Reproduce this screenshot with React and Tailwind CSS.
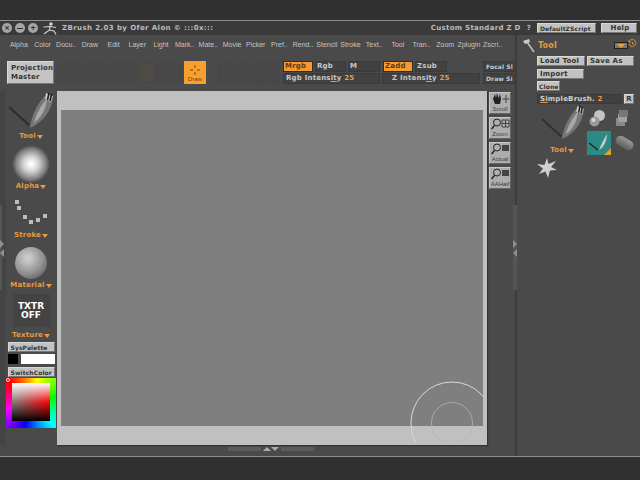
import React from 'react';

const menu = ['Alpha', 'Color', 'Docu..', 'Draw', 'Edit', 'Layer', 'Light', 'Mark..', 'Mate..', 'Movie', 'Picker', 'Pref..', 'Rend..', 'Stencil', 'Stroke', 'Text..', 'Tool', 'Tran..', 'Zoom', 'Zplugin', 'Zscri..'];

const label = "font-['DejaVu_Sans',sans-serif] font-bold text-[7px] leading-[9px] tracking-[0.2px] whitespace-nowrap";
const tight = "!text-[6px] !tracking-[0.1px]";
const mark = "underline decoration-[#e89a3c] underline-offset-1";

const GrayBtn = ({ children, className = '' }) => (
  <div className={`${label} flex items-center pl-[2px] bg-[#c2c2c2] text-[#333] border border-[#d8d8d8] border-b-[#777] border-r-[#777] overflow-hidden ${className}`}>
    {children}
  </div>
);

const DarkField = ({ children, className = '' }) => (
  <div className={`${label} flex items-center pl-[2px] bg-[#414141] text-[#c8c8c8] border border-[#3a3a3a] overflow-hidden ${className}`}>
    {children}
  </div>
);

const OrangeLabel = ({ children }) => (
  <div className={`${label} flex items-center justify-center gap-[1px] text-[#e89a3c]`}>
    {children}
    <span className="w-0 h-0 border-x-[3.5px] border-x-transparent border-t-[4px] border-t-[#e89a3c]" />
  </div>
);

const Brush = ({ className = '' }) => (
  <svg className={className} viewBox="0 0 46 38" fill="none">
    <path d="M1 15 L21 33" stroke="#2c2c2c" strokeWidth="1.8" />
    <path d="M22 36 C23 24 30 10 39 2 L45 5 C44 17 36 30 22 36 Z" fill="#777" />
    <path d="M26 31 C28 22 33 13 39 7 C38 16 34 25 26 31 Z" fill="#a8a8a8" />
    <path d="M38 1 L45 4 L43 10 L37 7 Z" fill="#c8c8c8" />
    <path d="M41 1 L39.5 8 M43.5 2 L42 9" stroke="#1d1d1d" strokeWidth="1.6" />
  </svg>
);

const SideBtn = ({ title, children }) => (
  <div className="w-[22px] h-[22px] bg-[#adadad] border border-[#c8c8c8] border-b-[#666] border-r-[#666] flex flex-col items-center">
    <div className="h-[12px] flex items-center">{children}</div>
    <span className="font-['Liberation_Sans',sans-serif] text-[6px] leading-[8px] text-[#3d3d3d] whitespace-nowrap">{title}</span>
  </div>
);

const Magnifier = ({ icon }) => (
  <svg width="19" height="12" viewBox="0 0 19 12" fill="none">
    <circle cx="6" cy="4.5" r="3.5" stroke="#222" />
    <path d="M3.5 7.5 L0.5 11" stroke="#222" strokeWidth="1.4" />
    {icon === 'bar' ? <rect x="11" y="2" width="7" height="6" fill="#444" /> : <path d="M11 2 H18 V9 H11 Z M14.5 2 V9 M11 5.5 H18" stroke="#444" />}
  </svg>
);

const Ghost = ({ w, color = 'bg-[#484848]' }) => <div className={`h-[20px] border border-[#464646] ${color}`} style={{ width: w }} />;

const Arrows = ({ className = '' }) => (
  <div className={`absolute flex flex-col gap-[1px] ${className}`}>
    <span className="w-0 h-0 border-y-[4px] border-y-transparent border-l-[4px] border-l-[#8f8f8f]" />
    <span className="w-0 h-0 border-y-[4px] border-y-transparent border-r-[4px] border-r-[#8f8f8f]" />
  </div>
);

export default function App() {
  return (
    <div className="w-[640px] h-[480px] overflow-hidden flex flex-col bg-[#303030]">
      <div className="h-[20px] shrink-0 bg-[#303030]" />
      <div className="h-[1px] shrink-0 bg-[#8d8d8d]" />

      {/* Title bar */}
      <div className="h-[14px] shrink-0 bg-[#3a3a3a] flex items-center relative">
        <div className="flex items-center gap-[3px] ml-[2px]">
          <span className="w-[10px] h-[10px] rounded-full bg-[#a5a5a5] text-[#333] text-[9px] leading-[9px] text-center font-bold">×</span>
          <span className="w-[10px] h-[10px] rounded-full bg-[#a5a5a5] flex items-center justify-center"><span className="w-[6px] h-[1px] bg-[#333]" /></span>
          <span className="w-[10px] h-[10px] rounded-full bg-[#a5a5a5] text-[#333] text-[9px] leading-[9px] text-center font-bold">+</span>
        </div>
        <svg className="ml-[5px]" width="14" height="13" viewBox="0 0 14 13" fill="none" stroke="#d0d0d0" strokeWidth="1.2">
          <circle cx="8" cy="2" r="1.2" fill="#d0d0d0" />
          <path d="M0.5 5 L7 4.5 L13 5.5 M7 4.5 L6.5 8 L1 12 M6.5 8 L11 9 L13 12.5" />
        </svg>
        <span className={`${label} ml-[5px] text-[#bcbcbc] tracking-[0.4px]`}>ZBrush 2.03 by Ofer Alon © :::0x:::</span>
        <span className={`${label} ml-auto text-[#bcbcbc] tracking-[0.3px]`}>Custom Standard Z D</span>
        <span className={`${label} ml-[6px] text-[#bcbcbc]`}>?</span>
        <GrayBtn className={`ml-[6px] w-[59px] h-[10px] ${tight}`}>DefaultZScript</GrayBtn>
        <GrayBtn className="ml-[5px] w-[36px] h-[10px] justify-center">Help</GrayBtn>
        <div className="w-[3px]" />
      </div>

      {/* Main */}
      <div className="flex h-[421px] shrink-0 bg-[#4a4a4a] relative">
        <div className="w-[515px] flex flex-col shrink-0">
          {/* Menu */}
          <div className="h-[18px] flex items-center pl-[7px] shrink-0">
            {menu.map((m) => (
              <div key={m} className="w-[23.7px] shrink-0 flex justify-center font-['Liberation_Sans',sans-serif] text-[7px] leading-[9px] text-[#c4c4c4] whitespace-nowrap">{m}</div>
            ))}
          </div>

          {/* Toolbar */}
          <div className="h-[38px] shrink-0 flex pl-[7px] pt-[8px]">
            <GrayBtn className="w-[48px] h-[23px] leading-[8px] pl-[3px] text-[#222] bg-[#c4c4c4]">Projection<br />Master</GrayBtn>
            <div className="flex gap-[1px] ml-[3px] mt-[2px] h-[20px]">
              <Ghost w={25} />
              <Ghost w={26} />
              <Ghost w={28} />
              <Ghost w={16} color="bg-[#4e4a44]" />
              <Ghost w={26} />
            </div>
            <div className="w-[23px] h-[23px] ml-[2px] bg-[#f7a030] flex flex-col items-center text-[#6b4210]">
              <svg className="mt-[4px]" width="10" height="10" viewBox="0 0 10 10" stroke="#7a4a12"><path d="M5 0 V3 M5 7 V10 M0 5 H3 M7 5 H10" /></svg>
              <span className="font-['Liberation_Sans',sans-serif] text-[6px] leading-[8px]">Draw</span>
            </div>
            <div className="flex gap-[1px] ml-[12px] mt-[2px] h-[20px]">
              <Ghost w={18} />
              <Ghost w={18} />
              <Ghost w={24} />
            </div>
            <div className="ml-[3px] flex flex-col gap-[1px] shrink-0">
              <div className="flex gap-[2px]">
                <div className={`${label} w-[30px] h-[11px] flex items-center pl-[1px] bg-[#f59a30] text-[#5c3a12] border border-[#2e2e2e]`}>Mrgb</div>
                <DarkField className="w-[31px] h-[11px] !pl-[1px]">Rgb</DarkField>
                <DarkField className="w-[32px] h-[11px] !pl-[1px]">M</DarkField>
                <div className={`${label} ml-[1px] w-[30px] h-[11px] flex items-center pl-[1px] bg-[#f59a30] text-[#5c3a12] border border-[#2e2e2e]`}>Zadd</div>
                <DarkField className="w-[32px] h-[11px] !pl-[1px]">Zsub</DarkField>
              </div>
              <div className="flex gap-[2px]">
                <DarkField className="w-[97px] h-[11px]">
                  <span>Rgb Intens<span className={mark}>it</span>y&nbsp;<span className="text-[#e89a3c]">25</span></span>
                </DarkField>
                <DarkField className="w-[98px] h-[11px] !pl-[9px]">
                  <span>Z Intens<span className={mark}>it</span>y&nbsp;<span className="text-[#e89a3c]">25</span></span>
                </DarkField>
              </div>
            </div>
            <div className="ml-[3px] flex flex-col gap-[1px] w-[32px] overflow-hidden shrink-0">
              <DarkField className={`w-[40px] h-[11px] ${tight}`}>Focal Sl</DarkField>
              <DarkField className={`w-[40px] h-[11px] ${tight}`}>Draw Si</DarkField>
            </div>
          </div>

          {/* Body */}
          <div className="flex flex-1 min-h-0">
            {/* Left strip */}
            <div className="w-[6px] shrink-0 bg-[#444] relative">
              <div className="absolute left-0 top-[114px] w-[2px] h-[85px] bg-[#555]" />
              <Arrows className="left-0 top-[149px]" />
            </div>

            {/* Tools column */}
            <div className="w-[51px] shrink-0 flex flex-col items-center pr-[1px]">
              <Brush className="w-[46px] h-[38px] mt-[1px]" />
              <div className="mt-[2px]"><OrangeLabel>Tool</OrangeLabel></div>
              <div className="w-[38px] h-[36px] mt-[5px] rounded-full bg-[radial-gradient(circle,#fff_5%,#d0d0d0_30%,#808080_58%,#4a4a4a_72%)]" />
              <OrangeLabel>Alpha</OrangeLabel>
              <svg className="mt-[2px]" width="34" height="38" viewBox="0 0 34 38" fill="#bcbcbc">
                <rect x="1" y="7" width="4" height="4" />
                <rect x="3" y="13" width="4" height="4" />
                <rect x="9" y="22" width="4" height="4" />
                <rect x="15" y="27" width="4" height="4" />
                <rect x="22" y="25" width="4" height="4" />
                <rect x="29" y="21" width="4" height="4" />
              </svg>
              <OrangeLabel>Stroke</OrangeLabel>
              <div className="w-[32px] h-[32px] mt-[7px] rounded-full bg-[radial-gradient(circle_at_40%_35%,#c8c8c8_10%,#8f8f8f_55%,#444_100%)]" />
              <div className="mt-[2px]"><OrangeLabel>Material</OrangeLabel></div>
              <div className="w-[37px] h-[33px] mt-[4px] bg-[#434343] flex items-center justify-center text-center font-['DejaVu_Sans',sans-serif] font-bold text-[9px] leading-[9px] text-white">TXTR<br />OFF</div>
              <div className="mt-[4px]"><OrangeLabel>Texture</OrangeLabel></div>
              <GrayBtn className={`w-[47px] h-[10px] mt-[2px] text-[#333] ${tight}`}>SysPalette</GrayBtn>
              <div className="flex w-[47px] mt-[2px] gap-[3px]">
                <div className="w-[10px] h-[10px] bg-black" />
                <div className="flex-1 h-[10px] bg-white" />
              </div>
              <GrayBtn className={`w-[47px] h-[10px] mt-[3px] text-[#333] ${tight}`}>SwitchColor</GrayBtn>
              <div className="w-[50px] h-[50px] mt-[1px] px-[6px] pt-[5px] pb-[7px] relative bg-[conic-gradient(from_-45deg,#f00,#ff0,#0f0,#0ff,#00f,#f0f,#f00)]">
                <div className="w-full h-full bg-[linear-gradient(to_bottom,#fff,transparent_50%,#000),linear-gradient(to_right,#808080,#f00)]" />
                <span className="absolute left-0 top-0 w-[4px] h-[4px] rounded-full border border-[#ddd]" />
              </div>
            </div>

            {/* Canvas */}
            <div className="w-[430px] h-[354px] shrink-0 bg-[#c0c0c0] relative pt-[19px] px-[4px] shadow-[1px_1px_1px_#333]">
              <div className="h-[316px] bg-[#7f7f7f]" />
              <svg className="absolute left-0 top-0" width="426" height="351" viewBox="0 0 426 351" fill="none">
                <circle cx="395" cy="332" r="41" strokeWidth="1" stroke="#d8d8d8" />
                <circle cx="395" cy="332" r="20.5" strokeWidth="0.8" stroke="#b4b4b4" />
              </svg>
            </div>

            {/* Zoom buttons */}
            <div className="w-[28px] shrink-0 flex flex-col items-center gap-[3px] pt-[1px] pr-[2px]">
              <SideBtn title="Scroll">
                <svg width="19" height="12" viewBox="0 0 19 12" fill="none">
                  <path d="M2 6 L4 1 L5 5 L6 0 L7.5 5 L9 1 L10 6 L9 11 H4 Z" fill="#222" />
                  <path d="M15 2 V10 M11.5 6 H18.5" stroke="#444" />
                </svg>
              </SideBtn>
              <SideBtn title="Zoom"><Magnifier /></SideBtn>
              <SideBtn title="Actual"><Magnifier icon="bar" /></SideBtn>
              <SideBtn title="AAHalf"><Magnifier icon="bar" /></SideBtn>
            </div>
          </div>

          {/* Bottom handle */}
          <div className="h-[11px] shrink-0 flex justify-center items-start pt-[2px] pl-[27px]">
            <div className="w-[33px] h-[4px] bg-[#5c5c5c]" />
            <span className="ml-[2px] w-0 h-0 border-x-[4px] border-x-transparent border-b-[4px] border-b-[#aaa]" />
            <span className="w-0 h-0 border-x-[4px] border-x-transparent border-t-[4px] border-t-[#aaa]" />
            <div className="ml-[2px] w-[33px] h-[4px] bg-[#5c5c5c]" />
          </div>
        </div>

        {/* Right panel */}
        <div className="flex-1 relative flex flex-col pl-[20px] bg-[#4a4a4a] border-l-[2px] border-[#3c3c3c]">
          <div className="absolute -left-[4px] top-[170px] w-[4px] h-[85px] bg-[#555]" />
          <Arrows className="-left-[4px] top-[205px]" />
          <div className="h-[21px] flex items-center -ml-[15px] shrink-0">
            <svg width="13" height="15" viewBox="0 0 13 15" fill="none">
              <path d="M1 3 L7 1 L8 4 L3 6 Z" fill="#cfcfcf" />
              <path d="M5 4 L12 14" stroke="#bdbdbd" strokeWidth="1.6" />
            </svg>
            <span className={`${label} ml-[3px] text-[#e89a3c] !text-[8px]`}>Tool</span>
            <div className="ml-auto mr-[12px] w-[14px] h-[7px] border border-[#222] bg-[#777] flex items-center justify-center">
              <span className="w-0 h-0 border-x-[4px] border-x-transparent border-t-[4px] border-t-[#f0a030]" />
            </div>
            <svg className="absolute right-[3px] top-[4px]" width="9" height="9" viewBox="0 0 9 9" fill="none" stroke="#d98a30"><path d="M1.5 2 A3.5 3.5 0 1 1 1 5 M1 1 V3 H3 M4.5 3 V5 H6" /></svg>
          </div>
          <div className="flex gap-[2px] h-[10px] shrink-0">
            <GrayBtn className="w-[48px]">Load Tool</GrayBtn>
            <GrayBtn className="w-[47px]">Save As</GrayBtn>
          </div>
          <GrayBtn className="w-[47px] h-[10px] mt-[3px] shrink-0">Import</GrayBtn>
          <GrayBtn className={`w-[23px] h-[10px] mt-[2px] shrink-0 !pl-[1px] ${tight}`}>Clone</GrayBtn>
          <div className="flex gap-[2px] h-[10px] mt-[3px] shrink-0">
            <DarkField className="w-[85px] bg-[#3e3e3e] text-[#d0d0d0]">
              <span><span className={mark}>Si</span>mpleBrush.&nbsp;<span className="text-[#e89a3c]">2</span></span>
            </DarkField>
            <GrayBtn className="w-[10px] justify-center !pl-0">R</GrayBtn>
          </div>

          <div className="flex mt-[1px] shrink-0">
            <div className="w-[50px] flex flex-col items-center">
              <Brush className="w-[46px] h-[36px] ml-[2px]" />
              <div className="mt-[5px]"><OrangeLabel>Tool</OrangeLabel></div>
            </div>
            <div className="flex flex-col">
              <div className="flex h-[26px] items-center">
                <svg className="ml-[2px]" width="17" height="17" viewBox="0 0 17 17">
                  <circle cx="10.5" cy="5.5" r="5.5" fill="#c4c4c4" />
                  <circle cx="5.5" cy="11.5" r="5" fill="#999" />
                  <circle cx="4.5" cy="10" r="2" fill="#d8d8d8" />
                </svg>
                <svg className="ml-[10px]" width="12" height="16" viewBox="0 0 12 16">
                  <rect x="0" y="8" width="9" height="8" fill="#888" />
                  <rect x="2" y="4" width="9" height="8" fill="#a2a2a2" />
                  <rect x="3" y="0" width="9" height="7" fill="#777" />
                </svg>
              </div>
              <div className="flex items-start">
                <div className="w-[24px] h-[24px] bg-[#2a8a84] relative">
                  <svg className="absolute inset-0" width="24" height="24" viewBox="0 0 24 24" fill="none">
                    <path d="M2 12 L11 19" stroke="#222" strokeWidth="1.4" />
                    <path d="M12 19 C14 13 17 8 20 3 C20 10 17 16 12 19 Z" fill="#c8c8c8" />
                    <path d="M17 24 L24 17 V24 Z" fill="#e0a030" />
                  </svg>
                </div>
                <div className="ml-[4px] mt-[7px] w-[19px] h-[10px] rounded-full rotate-[30deg] bg-[linear-gradient(#999,#5c5c5c)]" />
              </div>
            </div>
          </div>
          <svg className="mt-[3px] shrink-0" width="20" height="20" viewBox="0 0 20 20" fill="#d0d0d0">
            <path d="M10 0 L11.5 6 L19 3 L14 9 L20 12 L13 12.5 L11 20 L8.5 13.5 L2 16 L6 10.5 L0 6 L7.5 7 Z" />
          </svg>
        </div>
      </div>

      <div className="h-[1px] shrink-0 bg-[#8d8d8d]" />
      <div className="flex-1 bg-[#303030]" />
    </div>
  );
}
